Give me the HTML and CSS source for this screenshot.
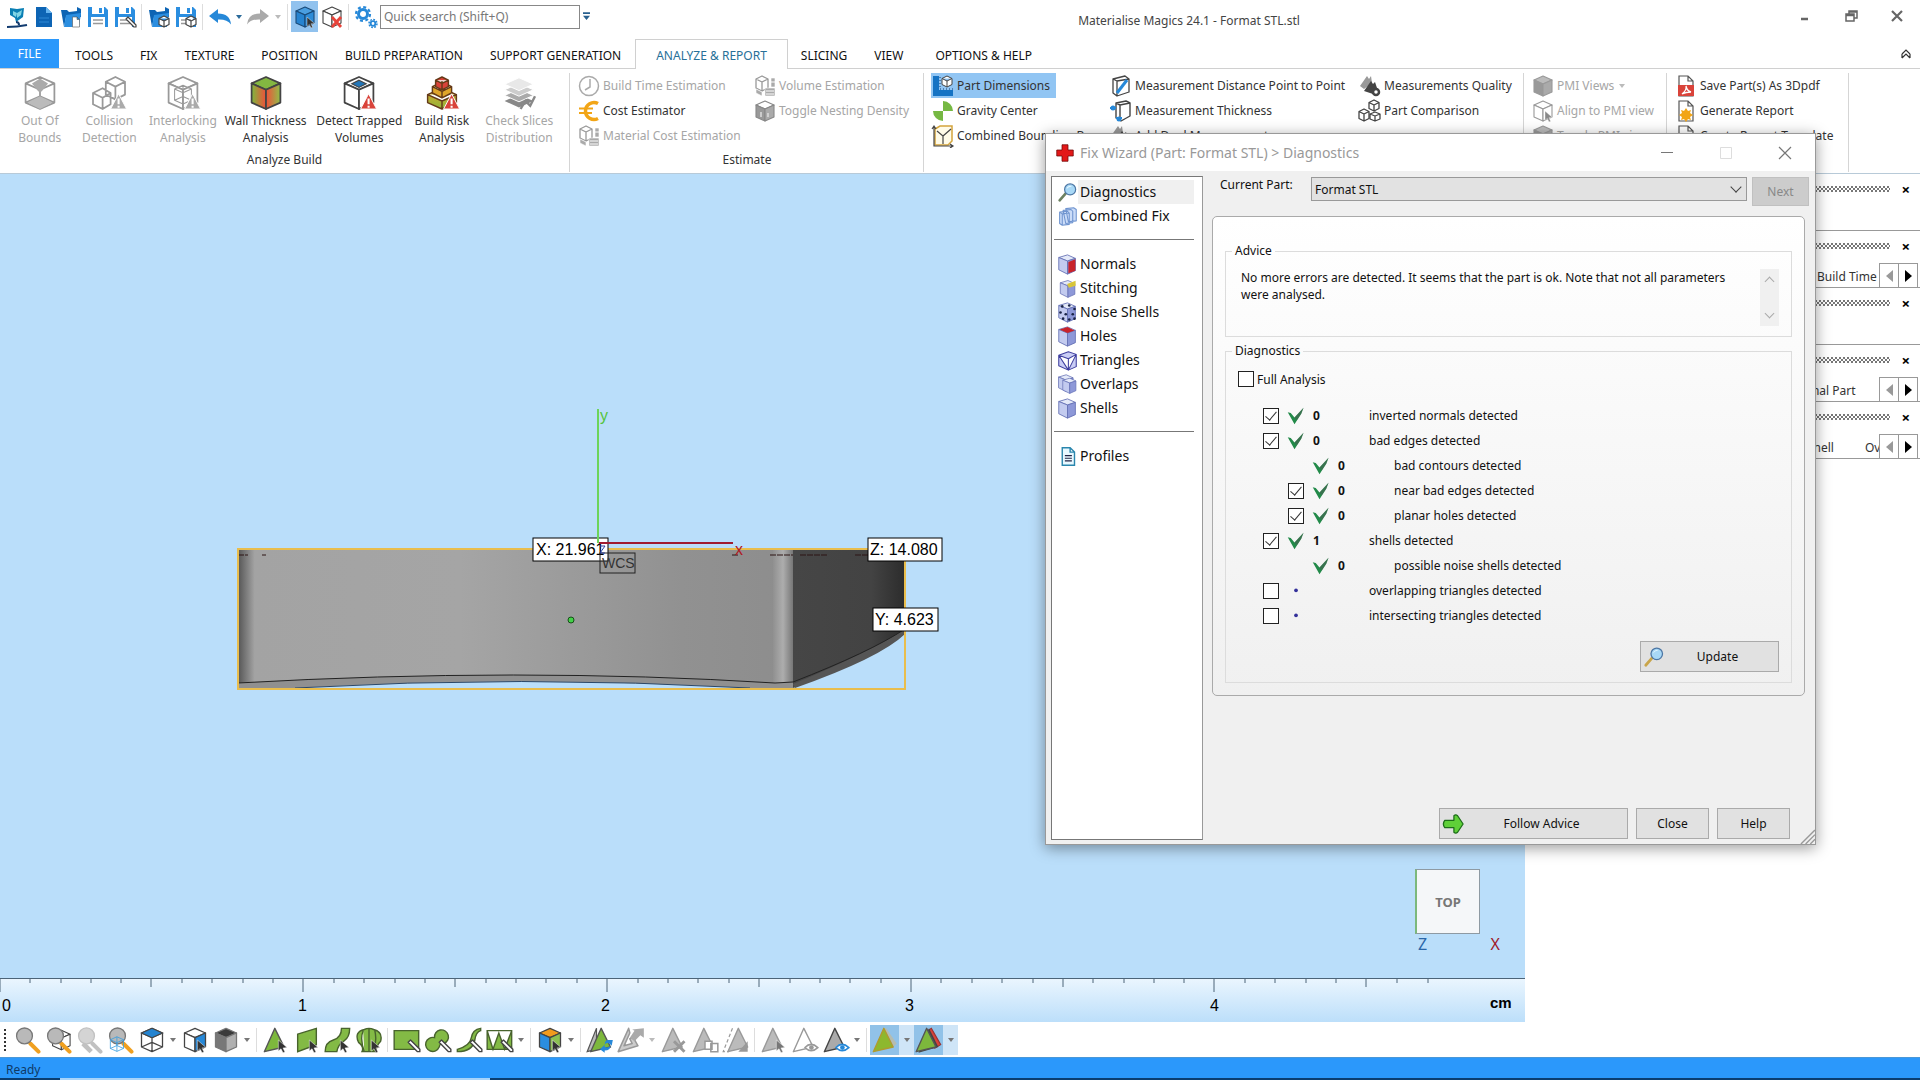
FILE: index.html
```
<!DOCTYPE html>
<html lang="en">
<head>
<meta charset="UTF-8">
<meta name="viewport" content="width=device-width, initial-scale=1.0">
<title>Materialise Magics 24.1 - Format STL.stl</title>
<link rel="stylesheet" href="styles.css">
</head>
<body>

<!-- shared icon shapes, 24x24 -->
<svg class="defs" aria-hidden="true">
<defs>
<linearGradient id="gBody"><stop offset="0" stop-color="#555"/><stop offset=".03" stop-color="#a3a3a3"/><stop offset=".4" stop-color="#a5a5a5"/><stop offset=".8" stop-color="#919191"/><stop offset="1" stop-color="#8d8d8d"/></linearGradient>
<linearGradient id="gEdge"><stop offset="0" stop-color="#909090"/><stop offset=".5" stop-color="#adadad"/><stop offset="1" stop-color="#777"/></linearGradient>
<linearGradient id="gSide"><stop offset="0" stop-color="#464646"/><stop offset=".7" stop-color="#434343"/><stop offset="1" stop-color="#2c2c2c"/></linearGradient>
<linearGradient id="gHeatL"><stop offset="0" stop-color="#7db83c"/><stop offset="1" stop-color="#f0503a"/></linearGradient>
<linearGradient id="gHeatR"><stop offset="0" stop-color="#f0503a"/><stop offset="1" stop-color="#8fc048"/></linearGradient>
<linearGradient id="gRisk" x1="0" y1="0" x2="0" y2="1"><stop offset="0" stop-color="#e0a52c"/><stop offset="1" stop-color="#8fb63a"/></linearGradient>
</defs>
<symbol id="cube" viewBox="0 0 24 24"><g stroke="var(--line,#444)" stroke-width="1.1" stroke-linejoin="round"><path fill="var(--top,#fff)" d="M12 2l9 4-9 4-9-4z"/><path fill="var(--left,#fff)" d="M3 6l9 4v12l-9-4z"/><path fill="var(--right,#fff)" d="M21 6l-9 4v12l9-4z"/></g></symbol>
<symbol id="wire" viewBox="0 0 24 24"><path fill="none" stroke="var(--line,#444)" stroke-width="1.1" stroke-linejoin="round" d="M12 2l9 4-9 4-9-4zM3 6v12l9 4 9-4V6M12 10v12M3 18l9-4 9 4M12 2v12"/></symbol>
<symbol id="warn" viewBox="0 0 24 24"><path fill="var(--warn,#d9433a)" stroke="#fff" stroke-width=".6" d="M18 12.500l5 9.500H13z"/><path stroke="#fff" stroke-width="1.300" d="M18 15.500v3.500M18 20v1.200"/></symbol>
<symbol id="cursor" viewBox="0 0 24 24"><path fill="var(--cur,#333)" stroke="#fff" stroke-width=".4" d="M14 12v9.500l2.300-2 1.700 3.500 1.700-.8-1.700-3.400 3.500-.3z"/></symbol>
<symbol id="tri" viewBox="0 0 24 24"><path fill="var(--fill,#7db83c)" stroke="var(--line,#555)" stroke-width="1.200" stroke-linejoin="round" d="M11 2l8 16L2 22z"/></symbol>
<symbol id="lens" viewBox="0 0 24 24"><path stroke="var(--grip,#f0a020)" stroke-width="3.400" stroke-linecap="round" d="M14 15l7 7"/><circle cx="9" cy="8.500" r="6.800" fill="#b9b9b9" stroke="var(--line,#777)" stroke-width="1.100"/></symbol>
<symbol id="find" viewBox="0 0 24 24"><path stroke="var(--grip,#6c8060)" stroke-width="3" stroke-linecap="round" d="M3 21l7-8"/><circle cx="15" cy="8.500" r="6.300" fill="#a8d8f6" stroke="#4d77a5" stroke-width="1.400"/><path fill="#e6f6ff" d="M11 8a4 4 0 0 1 6-3q-4 0-6 3z"/></symbol>
<symbol id="page" viewBox="0 0 24 24"><path fill="#fff" stroke="#555" stroke-width="1.200" d="M5 2h9l5 5v15H5zM14 2v5h5"/></symbol>
<symbol id="bluepage" viewBox="0 0 24 24"><path fill="#0d64b4" d="M4 2h10l6 6v14H4z"/><path fill="#65b4f0" d="M14 2v6h6z"/><path stroke="#2e87d4" stroke-width="1.200" d="M7 13h10M7 17h10"/></symbol>
<symbol id="open" viewBox="0 0 24 24"><path fill="#0d64b4" d="M2 5h6l2 2 8-1V2l4 2v8H7L5 22z"/><path fill="#2b8ee0" d="M7 10l15-2-2 14H5z"/></symbol>
<symbol id="save" viewBox="0 0 24 24"><path fill="#2b8ee0" d="M2 2h17l3 3v17H2z"/><path fill="#fff" d="M6 2h12v7H6zM5 12h14v10H5z"/><path fill="#2b8ee0" d="M13 3h3v5h-3z"/><path stroke="#999" stroke-width="1.400" d="M7 15h10M7 18.500h10"/></symbol>
<symbol id="pen" viewBox="0 0 24 24"><path fill="#fff" stroke="var(--pen,#444)" stroke-width="1.200" stroke-linejoin="round" d="M13 14l2-2 8 8v2h-2z"/></symbol>
<symbol id="minicube" viewBox="0 0 24 24"><path fill="#fff" stroke="#444" stroke-width="1.200" stroke-linejoin="round" d="M17 11l5 2.500v6L17 22l-5-2.500v-6zM12 13.500l5 2.500 5-2.500M17 16v6"/></symbol>
<symbol id="undo" viewBox="0 0 24 24"><path fill="currentColor" d="M1 11l9-7v4.500q12 0 13 11-4-5.500-13-5V18z"/></symbol>
<symbol id="gear" viewBox="0 0 24 24"><g fill="none" stroke="#2688d8"><circle cx="9" cy="9" r="4.500" stroke-width="3"/><circle cx="9" cy="9" r="7" stroke-width="2.200" stroke-dasharray="3 2.500"/><circle cx="19" cy="18.500" r="2.300" stroke-width="1.800"/><circle cx="19" cy="18.500" r="4" stroke-width="1.500" stroke-dasharray="1.800 1.300"/></g></symbol>
<symbol id="eye" viewBox="0 0 24 24"><path fill="#fff" stroke="var(--eye,#2688d8)" stroke-width="1.300" d="M12 18.500q5-5.500 11 0-6 5.500-11 0z"/><circle cx="17.500" cy="18.500" r="2" fill="var(--eye,#2688d8)"/></symbol>
<symbol id="boxes" viewBox="0 0 24 24"><path fill="#fff" stroke="#999" stroke-width="1.300" stroke-linejoin="round" d="M9 2l6 3v9l-6 3-6-3V5zM3 5l6 3 6-3M9 8v9"/><path fill="#aaa" stroke="#fff" stroke-width=".6" d="M3 15l6 3v4l-6-3zM12 14h10v8H12zM18 4h4v9h-4z"/><path stroke="#fff" d="M13 17h8M13 20h8M18 8h4"/></symbol>
<symbol id="measure" viewBox="0 0 24 24"><path fill="#fff" stroke="#444" stroke-width="1.300" stroke-linejoin="round" d="M4 5l12-3 4 3v13L8 22l-4-3zM4 5l4 2 12-2M8 7v15"/><path stroke="#2688d8" stroke-width="3" d="M8 19L18 6"/></symbol>
<symbol id="tools" viewBox="0 0 24 24"><path fill="#999" d="M2 12L9 2l2 3 2-3 1 7-8 6z"/><path fill="#444" d="M6 17l7-10 2 3 2-2 2 6-4 6z"/><circle cx="18" cy="18" r="3" fill="#fff" stroke="#444" stroke-width="2.500"/></symbol>
<symbol id="check" viewBox="0 0 24 24"><path fill="#228a49" d="M1 7l4 1 5 6L22 1l-3 8-9 14z"/><path fill="#555" opacity=".45" d="M22 1l-3 8-6 9-3-4z"/></symbol>
<symbol id="ccube" viewBox="0 0 24 24"><g stroke="#6671b5" stroke-width="1" stroke-linejoin="round"><path fill="var(--top,#e4e9f8)" d="M2 4l10-3 9 4-9 3z"/><path fill="var(--left,#c3cbef)" d="M2 4l10 4v15L2 18z"/><path fill="var(--right,#8d98d8)" d="M21 5l-9 3v15l9-4z"/></g></symbol>
</svg>

<div class="app">

<header class="titlebar">
<div class="quick">
<button class="qbtn" aria-label="Magics"><svg viewBox="0 0 24 24"><path fill="#0a7fb4" d="M5 3l7 1 7-1-1 9-7 5-1-4-5-3z"/><path fill="#7fd4e4" d="M8 6l4 2-1 4-3-2zM12 8l5-3-1 5-4 3z"/><path fill="none" stroke="#123c70" stroke-width="2" d="M2 22q10 0 20-2M11 17q3 0 3 3"/></svg></button>
<button class="qbtn" aria-label="New"><svg><use href="#bluepage"/></svg></button>
<button class="qbtn" aria-label="Load"><svg><use href="#open"/><use href="#page" x="11" y="11" width="12" height="12"/></svg></button>
<button class="qbtn" aria-label="Save"><svg><use href="#save"/></svg></button>
<button class="qbtn" aria-label="Save as"><svg><use href="#save"/><use href="#pen"/></svg></button>
<i class="qsep"></i>
<button class="qbtn" aria-label="Import part"><svg><use href="#open"/><use href="#minicube"/></svg></button>
<button class="qbtn" aria-label="Save part"><svg><use href="#save"/><use href="#minicube"/></svg></button>
<i class="qsep"></i>
<button class="qbtn blue" aria-label="Undo"><svg><use href="#undo"/></svg></button><i class="caret blue"></i>
<button class="qbtn grey flip" aria-label="Redo"><svg><use href="#undo"/></svg></button><i class="caret pale"></i>
<i class="qsep"></i>
<button class="qbtn on" aria-label="Select parts"><svg><use href="#cube" class="c-blue"/><use href="#cursor"/></svg></button>
<button class="qbtn" aria-label="Unload part"><svg><use href="#cube"/><path stroke="#e8433a" stroke-width="2.800" d="M12 12l9 10M21 12l-9 10"/></svg></button>
<i class="qsep"></i>
<button class="qbtn" aria-label="Settings"><svg><use href="#gear"/></svg></button>
<input class="search" type="text" placeholder="Quick search (Shift+Q)" aria-label="Quick search">
<svg class="more" viewBox="0 0 8 10"><path fill="#28608f" d="M0 0h8v2H0zM0 4h8L4 9z"/></svg>
</div>
<div class="caption">Materialise Magics 24.1 - Format STL.stl</div>
<div class="winbtns">
<button aria-label="Minimize"><svg viewBox="0 0 16 16"><path stroke="#666" stroke-width="2.500" d="M4 11h7"/></svg></button>
<button aria-label="Restore"><svg viewBox="0 0 16 16"><path fill="none" stroke="#666" stroke-width="1.500" d="M6 6V3h8v7h-3M3 6h8v7H3zM3 7.500h8M6 4h8"/></svg></button>
<button aria-label="Close"><svg viewBox="0 0 16 16"><path stroke="#666" stroke-width="2.200" d="M3 3l10 10M13 3L3 13"/></svg></button>
</div>
</header>

<nav class="menu">
<button class="file">FILE</button>
<a href="#">TOOLS</a>
<a href="#">FIX</a>
<a href="#">TEXTURE</a>
<a href="#">POSITION</a>
<a href="#">BUILD PREPARATION</a>
<a href="#">SUPPORT GENERATION</a>
<a href="#" class="active">ANALYZE &amp; REPORT</a>
<a href="#">SLICING</a>
<a href="#">VIEW</a>
<a href="#" class="last">OPTIONS &amp; HELP</a>
<button class="fold" aria-label="Collapse ribbon"><svg viewBox="0 0 12 12"><path fill="none" stroke="#333" stroke-width="1.200" d="M2 6l4-4 4 4M2 10l4-4 4 4M2 6v4M10 6v4"/></svg></button>
</nav>

<section class="ribbon">
<div class="group g-analyze">
<div class="bigs">
<button class="big b1 off"><svg><use href="#wire" class="c-grey"/><path fill="#aaa" d="M12 3l5 3-4 5h-2L7 6z"/><path fill="#bbb" d="M4 18l8-4 8 4-8 4z"/></svg>Out Of<br>Bounds</button>
<button class="big b2 off"><svg viewBox="0 0 24 24"><g fill="#fff" stroke="#999" stroke-width="1.100" stroke-linejoin="round"><path d="M16 2l6 3v8l-6 3-6-3V5zM10 5l6 3 6-3M16 8v8M8 9l5 3v7l-5 3-6-3v-7zM2 12l6 3 5-3M8 15v7"/></g><use href="#warn" class="c-grey"/></svg>Collision<br>Detection</button>
<button class="big b3 off"><svg><use href="#cube" class="c-grey"/><use href="#wire" class="c-grey" x="5" y="6" width="14" height="14"/><use href="#warn" class="c-grey"/></svg>Interlocking<br>Analysis</button>
<button class="big b4"><svg><use href="#cube" class="c-heat"/></svg>Wall Thickness<br>Analysis</button>
<button class="big b5"><svg><use href="#cube"/><path fill="#2376b8" stroke="#444" stroke-width=".7" d="M12 4l4.500 2.200L12 8.500 7.500 6.200z"/><use href="#warn"/></svg>Detect Trapped<br>Volumes</button>
<button class="big b6"><svg viewBox="0 0 24 24"><g stroke="#653a18" stroke-width=".9" stroke-linejoin="round"><path fill="url(#gRisk)" d="M12 9l9 4v5l-9 4-9-4v-5zM3 13l9 4 9-4M12 17v5"/><path fill="#dfa52b" d="M12 5l6 3v4l-6 3-6-3V8zM6 8l6 3 6-3M12 11v4"/><path fill="#d9433a" d="M12 2l4 2v4l-4 2-4-2V4zM8 4l4 2 4-2M12 6v4"/></g><use href="#warn"/></svg>Build Risk<br>Analysis</button>
<button class="big b7 off"><svg viewBox="0 0 24 24"><path fill="#888" d="M12 13l9 4-9 4-9-4z"/><path fill="#aaa" stroke="#fff" stroke-width=".6" d="M12 9.500l9 4-9 4-9-4z"/><path fill="#ccc" stroke="#fff" stroke-width=".6" d="M12 6l9 4-9 4-9-4z"/><path fill="#e8e8e8" stroke="#fff" stroke-width=".6" d="M12 2.500l9 4-9 4-9-4z"/><path fill="none" stroke="#888" stroke-width="1.500" d="M13 22l3-5 3 3 3-6"/></svg>Check Slices<br>Distribution</button>
</div>
<h2>Analyze Build</h2>
</div>

<div class="group g-estimate">
<div class="cols">
<div class="col w176">
<button class="small off"><svg viewBox="0 0 24 24"><circle cx="12" cy="12" r="9.500" fill="#fff" stroke="#aaa" stroke-width="1.500"/><path fill="none" stroke="#aaa" stroke-width="1.500" d="M13 5v8l-5 3"/></svg>Build Time Estimation</button>
<button class="small"><svg viewBox="0 0 24 24"><path fill="none" stroke="#f2a516" stroke-width="3.500" d="M21 4.500A8.500 8.500 0 1 0 21 19.500"/><path stroke="#f2a516" stroke-width="2.200" d="M2 9.500h14M2 14h13"/></svg>Cost Estimator</button>
<button class="small off"><svg><use href="#boxes"/></svg>Material Cost Estimation</button>
</div>
<div class="col">
<button class="small off"><svg><use href="#boxes"/></svg>Volume Estimation</button>
<button class="small off"><svg><use href="#cube" class="c-nest"/><path stroke="#ddd" stroke-width="1.500" d="M8 13v5M15 14v4"/></svg>Toggle Nesting Density</button>
</div>
</div>
<h2>Estimate</h2>
</div>

<div class="group g-measure">
<div class="cols">
<div class="col w180">
<button class="small on"><svg viewBox="0 0 24 24"><path fill="#1573c4" d="M2 2h6v14h14v6H2z"/><path stroke="#123c70" d="M9 3v12M22 15H9" stroke-dasharray="1 2"/><path fill="#fff" stroke="#444" d="M16 2l5 2.500v6L16 13l-5-2.500v-6zM11 4.500L16 7l5-2.500M16 7v6"/></svg>Part Dimensions</button>
<button class="small"><svg viewBox="0 0 24 24"><path fill="#76b843" d="M12 12V2a10 10 0 0 1 10 10zM12 12v10A10 10 0 0 1 2 12z"/></svg>Gravity Center</button>
<button class="small"><svg viewBox="0 0 24 24"><path fill="#fffbe8" stroke="#d3a43c" stroke-width="1.500" d="M4 5l5-3h12v15l-4 4H4z"/><path fill="none" stroke="#444" stroke-width="1.200" d="M3 3v19h18M6 7l6 5v8M12 12l8-7M1 5l2-3 2 3M19 20l3 2-3 2"/></svg>Combined Bounding Box</button>
</div>
<div class="col w248">
<button class="small"><svg><use href="#measure"/></svg>Measurement Distance Point to Point</button>
<button class="small"><svg viewBox="0 0 24 24"><path fill="#fff" stroke="#444" stroke-width="1.400" stroke-linejoin="round" d="M7 4l10-2 4 2v13l-9 5-5-3zM7 4l4 2 10-2M11 6v15"/><path stroke="#2688d8" stroke-width="2" d="M1 9h6M7 19h6"/><circle cx="4" cy="9" r="2.500" fill="#2688d8"/><circle cx="10" cy="20" r="2.500" fill="#2688d8"/></svg>Measurement Thickness</button>
<button class="small"><svg><use href="#tools"/></svg>Add Dual Measurement</button>
</div>
<div class="col">
<button class="small"><svg><use href="#tools"/></svg>Measurements Quality</button>
<button class="small"><svg viewBox="0 0 24 24"><g fill="#fff" stroke="#444" stroke-width="1.300" stroke-linejoin="round"><path d="M16 1l5 2.500v6L16 12l-5-2.500v-6zM11 3.500L16 6l5-2.500M16 6v6M6 10l5 2.500v7L6 22l-5-2.500v-7zM1 12.500L6 15l5-2.500M6 15v7"/><path d="M17 13l5 2v5l-5 2-5-2v-5zM12 15l5 2 5-2M17 17v5"/></g></svg>Part Comparison</button>
</div>
</div>
</div>

<div class="group g-pmi">
<div class="col">
<button class="small off"><svg><use href="#cube" class="c-solid"/></svg>PMI Views <i class="caret pale"></i></button>
<button class="small off"><svg><use href="#cube" class="c-grey"/><use href="#cursor" class="c-grey"/></svg>Align to PMI view</button>
<button class="small off"><svg><use href="#cube" class="c-solid"/></svg>Toggle PMI view</button>
</div>
</div>

<div class="group g-report">
<div class="col">
<button class="small"><svg><use href="#page"/><path fill="#d9433a" d="M4 11h16v11H4z"/><path fill="none" stroke="#fff" stroke-width="1.300" d="M8 20q5-4 4-8 1 5 5 6-5 0-9 2z"/></svg>Save Part(s) As 3Dpdf</button>
<button class="small"><svg><use href="#page"/><path fill="#f2a516" d="M12 9l2 3 3-1-1 3 3 2-3 2 1 3-3-1-2 3-2-3-3 1 1-3-3-2 3-2-1-3 3 1z"/></svg>Generate Report</button>
<button class="small"><svg><use href="#page"/></svg>Create Report Template</button>
</div>
</div>
</section>

<main class="work">
<div class="left">
<div class="viewport">
<svg class="scene" viewBox="0 0 740 310" role="img" aria-label="Part with dimensions">
<path fill="url(#gSide)" d="M573 149H685V232Q670 252 573 288z"/>
<path fill="#555" d="M573 284Q650 252 685 229V234Q660 258 575 288z"/>
<path fill="url(#gBody)" d="M18 149H573V288H530Q300 275 75 288H18z"/>
<path fill="url(#gEdge)" d="M553 149h20v139h-20z"/>
<path fill="#909090" d="M18 283Q300 267 555 283L573 282V288H530Q300 275 75 288H18z"/>
<path fill="none" stroke="#222" d="M18 283Q300 267 555 283L573 282Q650 252 685 229"/>
<path fill="none" stroke="#2c4868" d="M75 288Q300 275 530 288"/>
<path fill="none" stroke="#2c1515" d="M18 155h10M42 155h4M512 155h7M550 155h23M580 155h28M635 155h14" stroke-dasharray="6 1"/>
<path fill="none" stroke="#e9bd4c" stroke-width="2" d="M18 149H685V289H18z"/>
<g class="dim">
<rect x="313" y="138" width="75" height="23"/><text x="316" y="155">X: 21.961</text>
<rect x="648" y="138" width="74" height="23"/><text x="650" y="155">Z: 14.080</text>
<rect x="653" y="208" width="65" height="23"/><text x="655" y="225">Y: 4.623</text>
</g>
<path stroke="#6dd45a" stroke-width="2" d="M378 9v134"/>
<path stroke="#a01c30" stroke-width="2" d="M379 143h134"/>
<rect class="wcs" x="380" y="153" width="35" height="20"/>
<text class="wcstext" x="382" y="168">WCS</text>
<text class="ylab" x="380" y="21">y</text>
<text class="xlab" x="515" y="155">x</text>
<path fill="none" stroke="#2c3f9e" d="M380 146h5l-5 7h5"/>
<circle cx="351" cy="220" r="3" fill="#43d148" stroke="#174d19"/>
</svg>
<div class="orient">
<button class="face">TOP</button>
<div class="axes"><span class="az">Z</span><span class="ax">X</span></div>
</div>
</div>
<svg class="ruler" role="img" aria-label="Scale in centimetres">
<path class="ticks" d="M0 0v13M30 0v4M61 0v4M91 0v4M121 0v4M151 0v8M182 0v4M212 0v4M243 0v4M273 0v4M303 0v13M334 0v4M364 0v4M395 0v4M425 0v4M455 0v8M486 0v4M516 0v4M546 0v4M577 0v4M607 0v13M638 0v4M668 0v4M698 0v4M729 0v4M759 0v8M790 0v4M820 0v4M850 0v4M881 0v4M911 0v13M941 0v4M972 0v4M1002 0v4M1033 0v4M1063 0v8M1093 0v4M1124 0v4M1154 0v4M1184 0v4M1214 0v13M1245 0v4M1275 0v4M1306 0v4M1336 0v4M1366 0v8M1397 0v4M1428 0v4"/>
<text x="2" y="32">0</text><text x="298" y="32">1</text><text x="601" y="32">2</text><text x="905" y="32">3</text><text x="1210" y="32">4</text><text x="1490" y="29" class="unit">cm</text>
</svg>
</div>

<aside class="side">
<section class="pane"><div class="grip"><i></i><button aria-label="Close pane">×</button></div></section>
<section class="pane"><div class="grip"><i></i><button aria-label="Close pane">×</button></div><div class="ptabs"><div class="names n1"><span>Build Time</span></div><button aria-label="Previous"><i class="prev"></i></button><button aria-label="Following"><i class="next"></i></button></div></section>
<section class="pane"><div class="grip"><i></i><button aria-label="Close pane">×</button></div></section>
<section class="pane"><div class="grip"><i></i><button aria-label="Close pane">×</button></div><div class="ptabs"><div class="names n2"><span>Original Part</span></div><button aria-label="Previous"><i class="prev"></i></button><button aria-label="Following"><i class="next"></i></button></div></section>
<section class="pane"><div class="grip"><i></i><button aria-label="Close pane">×</button></div><div class="ptabs"><div class="names n3"><span>Shell</span><span>Overlap</span></div><button aria-label="Previous"><i class="prev"></i></button><button aria-label="Following"><i class="next"></i></button></div></section>
</aside>
</main>

<div class="toolbar">
<i class="handle"></i>
<button aria-label="Zoom"><svg viewBox="0 0 24 24"><use href="#lens"/></svg></button>
<button aria-label="Zoom part"><svg viewBox="0 0 24 24"><use href="#cube" x="4" width="20" height="24"/><use href="#lens"/></svg></button>
<button aria-label="Unzoom"><svg viewBox="0 0 24 24"><g opacity=".6"><path stroke="#999" stroke-width="4" d="M6 15l7 7"/><use href="#lens" class="c-grey"/></g></svg></button>
<button aria-label="Zoom all"><svg viewBox="0 0 24 24"><use href="#lens"/><use href="#wire" class="c-wire" x="1" y="8" width="15" height="15"/></svg></button>
<button aria-label="Top view"><svg viewBox="0 0 24 24"><use href="#wire"/><path fill="#2383d0" stroke="#444" d="M12 2l9 4-9 4-9-4z"/></svg></button><i class="caret"></i>
<button aria-label="Pick plane"><svg viewBox="0 0 24 24"><use href="#cube" class="c-half"/><use href="#cursor"/></svg></button>
<button aria-label="Shading"><svg viewBox="0 0 24 24"><use href="#cube" class="c-shade"/></svg></button><i class="caret"></i>
<i class="sep"></i>
<button aria-label="Mark triangle"><svg viewBox="0 0 24 24"><use href="#tri"/><use href="#cursor"/></svg></button>
<button aria-label="Mark plane"><svg viewBox="0 0 24 24"><path class="leaf" d="M4 7l16-5v14L4 22z"/><use href="#cursor"/></svg></button>
<button aria-label="Mark surface"><svg viewBox="0 0 24 24"><path class="leaf" d="M1 22q0-8 7-10t7-10h7q0 8-5 11t-6 9z"/><use href="#cursor"/></svg></button>
<button aria-label="Mark shell"><svg viewBox="0 0 24 24"><path class="leaf" d="M6 22q2-4-3-8Q-1 5 8 3q4-2 8 0 8 2 6 10-4 4-4 9zM7 4q-3 7 1 18M12 2v20M17 4q2 8-1 18"/><use href="#cursor"/></svg></button>
<i class="sep"></i>
<button aria-label="Mark rectangle"><svg viewBox="0 0 24 24"><path class="leaf" d="M1 4h21v16H1z"/><use href="#pen"/></svg></button>
<button aria-label="Mark brush"><svg viewBox="0 0 24 24"><path class="leaf" d="M9 10a6 6 0 1 1 8 5q-3-1-4 3A6 6 0 1 1 9 10z"/><use href="#pen"/></svg></button>
<button aria-label="Mark curve"><svg viewBox="0 0 24 24"><path class="leaf" d="M22 2q-7 1-8 8T2 20v2q13 0 15-10 1-7 5-8z"/><use href="#pen"/></svg></button>
<button aria-label="Mark mesh"><svg viewBox="0 0 24 24"><path class="leaf" d="M1 4h21v16H1zM1 4l5 16 5-14 5 14 6-16"/><use href="#pen"/></svg></button><i class="caret"></i>
<i class="sep"></i>
<button aria-label="Colour faces"><svg viewBox="0 0 24 24"><use href="#cube" class="c-rgb"/><use href="#cursor"/></svg></button><i class="caret"></i>
<i class="sep"></i>
<button aria-label="Invert marked"><svg viewBox="0 0 24 24"><path fill="#bbb" stroke="#555" d="M9 2L1 22l8-2z"/><use href="#tri" x="2"/><path fill="#2688d8" d="M12 20l4 3v-2q5 0 5-4-2 2-5 1v-2zM23 12l-1 5-2-2q-3-1-4 1 0-4 3-4z"/></svg></button>
<button aria-label="Grow marked"><svg viewBox="0 0 24 24"><path fill="#ccc" stroke="#999" stroke-width="1.300" stroke-linejoin="round" d="M10 2L1 22l17-5-4-7-3 1 2 4-7 2 5-11z"/><path fill="#aaa" d="M11 10l4-6-2-1 10-1v8l-3-2-5 5z"/></svg></button><i class="caret pale"></i>
<button aria-label="Delete marked"><svg viewBox="0 0 24 24"><use href="#tri" class="c-grey"/><path stroke="#999" stroke-width="2.500" d="M12 13l9 9M21 13l-9 9"/></svg></button>
<button aria-label="Copy marked"><svg viewBox="0 0 24 24"><use href="#tri" class="c-grey"/><path fill="#fff" stroke="#999" stroke-width="1.300" d="M12 13h6v7h-6zM17 15h6v7h-6z"/></svg></button>
<button aria-label="Separate marked"><svg viewBox="0 0 24 24"><path fill="none" stroke="#999" stroke-dasharray="3 2" d="M9 2L1 22h5"/><use href="#tri" class="c-grey" x="3"/><path fill="#999" d="M14 22l8-9v9z"/></svg></button>
<i class="sep"></i>
<button aria-label="Select marked"><svg viewBox="0 0 24 24"><use href="#tri" class="c-grey"/><use href="#cursor" class="c-cur"/></svg></button>
<button aria-label="Hide marked"><svg viewBox="0 0 24 24"><use href="#tri" class="c-white"/><use href="#eye" class="c-grey"/></svg></button>
<button aria-label="Show marked"><svg viewBox="0 0 24 24"><use href="#tri" class="c-dark"/><use href="#eye"/></svg></button><i class="caret"></i>
<i class="sep"></i>
<button class="on" aria-label="Front faces"><svg viewBox="0 0 24 24"><path fill="#b5bcb0" d="M13 2l9 13-3 3-8-16z"/><use href="#tri" class="c-lime"/></svg></button><i class="caret lit"></i>
<button class="on" aria-label="Back faces"><svg viewBox="0 0 24 24"><path fill="#d9433a" stroke="#933" d="M14 2l8 14-5 3L11 4z"/><path fill="#444" d="M12 2l8 16-17 5z"/><use href="#tri" x="-1"/></svg></button><i class="caret lit"></i>
</div>

<footer class="status">Ready</footer>
<div class="taskbar"><i></i></div>
</div>

<div class="dialog" role="dialog" aria-labelledby="dlgTitle">
<header class="dtitle">
<svg viewBox="0 0 24 24"><path fill="#e31818" stroke="#6b0505" d="M8 1h8v7h7v8h-7v7H8v-7H1V8h7z"/></svg>
<h1 id="dlgTitle">Fix Wizard (Part: Format STL) &gt; Diagnostics</h1>
<button aria-label="Minimize"><svg viewBox="0 0 16 16"><path stroke="#777" d="M2 7.500h12"/></svg></button>
<button aria-label="Maximize"><svg viewBox="0 0 16 16"><path fill="none" stroke="#ddd" d="M2.500 2.500h11v11h-11z"/></svg></button>
<button aria-label="Close dialog"><svg viewBox="0 0 16 16"><path stroke="#777" stroke-width="1.200" d="M2 2l12 12M14 2L2 14"/></svg></button>
</header>
<div class="dbody">
<nav class="pages">
<a href="#" class="current"><svg viewBox="0 0 24 24"><use href="#find"/></svg><span>Diagnostics</span></a>
<a href="#"><svg viewBox="0 0 24 24"><g fill="#cbdcf8" stroke="#6f94cf" stroke-width="1.200" stroke-linejoin="round"><path d="M10 3l9-1 3 2v13l-9 1zM7 5l9-1 2 2v13l-8 1zM3 7l9-1 2 2v13l-8 1-3-2zM3 7l3 2 8-1M6 9v13"/></g></svg><span>Combined Fix</span></a>
<hr>
<a href="#"><svg viewBox="0 0 24 24"><use href="#ccube"/><path fill="#c8232b" d="M13 9l8-3v13l-8 3z"/></svg><span>Normals</span></a>
<a href="#"><svg viewBox="0 0 24 24"><use href="#ccube" x="2" y="2" width="21" height="21"/><path fill="none" stroke="#d9c638" stroke-width="2.500" d="M12 8l8-3v3l-7 2"/></svg><span>Stitching</span></a>
<a href="#"><svg viewBox="0 0 24 24"><use href="#ccube"/><g fill="#1b2447"><circle cx="6" cy="5" r="1.500"/><circle cx="14" cy="4" r="1.500"/><circle cx="20" cy="8" r="1.500"/><circle cx="4" cy="12" r="1.500"/><circle cx="10" cy="14" r="1.500"/><circle cx="18" cy="14" r="1.500"/><circle cx="7" cy="19" r="1.500"/><circle cx="14" cy="20" r="1.500"/><circle cx="20" cy="19" r="1.500"/></g></svg><span>Noise Shells</span></a>
<a href="#"><svg viewBox="0 0 24 24"><use href="#ccube"/><path fill="#c8232b" d="M3 4l9-3 8 4-8 3z"/></svg><span>Holes</span></a>
<a href="#"><svg viewBox="0 0 24 24"><path fill="#c9cdf5" stroke="#3e3e9e" stroke-width="1.200" stroke-linejoin="round" d="M2 6l11-4 9 3v14l-9 4L2 18zM2 6l11 4 9-5M13 10v13M2 6l11 17 9-18"/></svg><span>Triangles</span></a>
<a href="#"><svg viewBox="0 0 24 24"><use href="#ccube" width="21" height="21"/><use href="#ccube" x="5" y="4" width="19" height="19"/></svg><span>Overlaps</span></a>
<a href="#"><svg viewBox="0 0 24 24"><use href="#ccube"/></svg><span>Shells</span></a>
<hr>
<a href="#"><svg viewBox="0 0 24 24"><path fill="#e8f8ff" stroke="#2a86ad" stroke-width="1.600" d="M6 2h9l5 5v15H6zM15 2v5h5"/><path stroke="#224" stroke-width="1.300" d="M9 11h8M9 14h8M9 17h8"/></svg><span>Profiles</span></a>
</nav>
<div class="dmain">
<div class="partrow">
<label for="part">Current Part:</label>
<div class="combo"><select id="part"><option>Format STL</option></select></div>
<button class="btn nextbtn" disabled>Next</button>
</div>
<div class="sheet">
<fieldset class="advice">
<legend>Advice</legend>
<p>No more errors are detected. It seems that the part is ok. Note that not all parameters were analysed.</p>
<div class="scroll"><i></i><i></i></div>
</fieldset>
<fieldset class="diag">
<legend>Diagnostics</legend>
<label class="full"><input type="checkbox">Full Analysis</label>
<ul>
<li><input type="checkbox" id="d1" checked><svg viewBox="0 0 24 24"><use href="#check"/></svg><b>0</b><label for="d1">inverted normals detected</label></li>
<li><input type="checkbox" id="d2" checked><svg viewBox="0 0 24 24"><use href="#check"/></svg><b>0</b><label for="d2">bad edges detected</label></li>
<li class="sub nobox"><svg viewBox="0 0 24 24"><use href="#check"/></svg><b>0</b><span>bad contours detected</span></li>
<li class="sub"><input type="checkbox" id="d3" checked><svg viewBox="0 0 24 24"><use href="#check"/></svg><b>0</b><label for="d3">near bad edges detected</label></li>
<li class="sub"><input type="checkbox" id="d4" checked><svg viewBox="0 0 24 24"><use href="#check"/></svg><b>0</b><label for="d4">planar holes detected</label></li>
<li><input type="checkbox" id="d5" checked><svg viewBox="0 0 24 24"><use href="#check"/></svg><b>1</b><label for="d5">shells detected</label></li>
<li class="sub nobox"><svg viewBox="0 0 24 24"><use href="#check"/></svg><b>0</b><span>possible noise shells detected</span></li>
<li><input type="checkbox" id="d6"><svg viewBox="0 0 24 24"><circle cx="12" cy="11" r="2.500" fill="#33309a"/></svg><b></b><label for="d6">overlapping triangles detected</label></li>
<li><input type="checkbox" id="d7"><svg viewBox="0 0 24 24"><circle cx="12" cy="11" r="2.500" fill="#33309a"/></svg><b></b><label for="d7">intersecting triangles detected</label></li>
</ul>
<button class="btn update"><svg viewBox="0 0 24 24"><use href="#find" class="c-gold"/></svg><span>Update</span></button>
</fieldset>
</div>
<div class="actions">
<button class="btn follow"><svg viewBox="0 0 24 24"><path fill="#5fd038" stroke="#1e6e1a" stroke-width="1.400" stroke-linejoin="round" d="M3 8h10V3q2-2 4 0l6 9-6 9q-2 2-4 0v-5H3q-3-4 0-8z"/></svg><span>Follow Advice</span></button>
<button class="btn">Close</button>
<button class="btn">Help</button>
</div>
</div>
</div>
<svg class="resize" viewBox="0 0 16 16"><path stroke="#999" stroke-width="1.500" d="M1 16L16 1M6 16L16 6M11 16l5-5"/></svg>
</div>

</body>
</html>
```
FILE: styles.css
```
* {
    box-sizing: border-box;
}
body {
    margin: 0;
    font-family: "Noto Sans", "Open Sans", sans-serif;
    font-size: 12px;
    color: #333;
    background: #fff;
    overflow: hidden;
}
button {
    font: inherit;
    color: inherit;
    background: none;
    border: 0;
    padding: 0;
}
a {
    color: inherit;
    text-decoration: none;
}
svg {
    display: block;
    flex: none;
}
.defs {
    position: absolute;
    width: 0;
    height: 0;
}
.app {
    display: flex;
    flex-direction: column;
    height: 100vh;
}

/* icon colours */
.c-grey {
    --line: #999;
    --fill: #bbb;
    --warn: #aaa;
    --cur: #888;
    --eye: #999;
    --grip: #999;
}
.c-cur { --cur: #777; }
.c-blue { --top: #4a9ee0; --left: #2683d0; --right: #2e8cd8; --line: #1a4a78; }
.c-heat { --top: #83b741; --left: url(#gHeatL); --right: url(#gHeatR); }
.c-nest { --top: #fff; --left: #999; --right: #aaa; --line: #888; }
.c-solid { --top: #bbb; --left: #999; --right: #aaa; --line: #999; }
.c-wire { --line: #3a9fe0; }
.c-half { --right: #2688d8; }
.c-shade { --top: #3a3a3a; --left: #777; --right: #b0b0b0; --line: #777; }
.c-rgb { --top: #f29b1d; --left: #2b8ee0; --right: #8cc152; }
.c-white { --fill: #fff; --line: #999; }
.c-dark { --fill: #aaa; --line: #444; }
.c-lime { --fill: #8db82e; --line: #b09a30; }
.c-gold { --grip: #c9a54a; }

.titlebar {
    display: flex;
    height: 39px;
    position: relative;
}
.quick {
    display: flex;
    height: 33px;
    align-items: center;
    padding-left: 3px;
}
.qbtn {
    width: 27px;
    height: 31px;
    display: flex;
    align-items: center;
    justify-content: center;
}
.qbtn svg {
    width: 24px;
    height: 24px;
}
.qbtn.on {
    background: #91c2ee;
}
.qbtn.blue { color: #2688d8; }
.qbtn.grey { color: #aaa; }
.qbtn.flip { transform: scaleX(-1); }
.qsep {
    width: 1px;
    height: 26px;
    margin: 0 3px;
    background: #ddd;
}
.caret {
    width: 12px;
    height: 8px;
    display: flex;
    align-items: center;
    justify-content: center;
}
.caret::after {
    content: "";
    border: 3px solid transparent;
    border-top: 4px solid #777;
    border-bottom: 0;
}
.caret.blue::after { border-top-color: #2a6a9a; }
.caret.pale::after { border-top-color: #bbb; }
.search {
    width: 200px;
    height: 24px;
    margin: 0 0 0 1px;
    padding: 0 3px;
    border: 1px solid #888;
    font: 12px "Noto Sans", sans-serif;
    color: #555;
}
.search::placeholder {
    color: #777;
}
.more {
    width: 7px;
    height: 9px;
    margin-left: 3px;
}
.caption {
    position: absolute;
    left: 458px;
    right: 0;
    top: 12px;
    text-align: center;
    line-height: 18px;
    color: #444;
    pointer-events: none;
}
.winbtns {
    display: flex;
    margin-left: auto;
    padding-right: 15px;
    gap: 30px;
    height: 31px;
    align-items: center;
}
.winbtns svg {
    width: 16px;
    height: 16px;
}

.menu {
    display: flex;
    height: 30px;
    border-bottom: 1px solid #d0d0d0;
    line-height: 34px;
    color: #111;
}
.menu a {
    padding: 0 14px 0 13px;
    height: 30px;
}
.menu .file {
    width: 59px;
    color: #fff;
    background: #2b98fb;
    margin-right: 3px;
    line-height: 30px;
}
.menu .active {
    height: 30px;
    padding: 0 20px;
    border: 1px solid #d0d0d0;
    border-bottom: 0;
    background: #fff;
    color: #287098;
    line-height: 32px;
}
.menu .last {
    padding-left: 18px;
}
.fold {
    margin-left: auto;
    padding-right: 8px;
}
.fold svg {
    width: 12px;
    height: 12px;
}

.ribbon {
    display: flex;
    height: 105px;
    padding: 4px 0 1px;
    border-bottom: 1px solid #b8cad8;
}
.group {
    display: flex;
    flex-direction: column;
    justify-content: space-between;
    border-right: 1px solid #d5d5d5;
    flex: none;
    white-space: nowrap;
    overflow: hidden;
}
.group h2 {
    margin: 0;
    font-size: 12px;
    font-weight: 400;
    line-height: 18px;
    text-align: center;
    height: 21px;
}
.g-analyze { width: 570px; }
.g-estimate { width: 354px; padding-left: 7px; }
.g-estimate h2 { padding-right: 6px; }
.g-measure { width: 600px; padding-left: 7px; }
.g-pmi { width: 143px; padding-left: 7px; }
.g-report { width: 182px; padding-left: 7px; }
.off {
    color: #a6a6a6;
}
.bigs {
    display: flex;
}
.big {
    display: flex;
    flex-direction: column;
    align-items: center;
    line-height: 17px;
}
.big svg {
    width: 24px;
    height: 24px;
    transform: scale(1.6);
    margin: 8px 0 7px;
}
.b1 { width: 80px; }
.b2 { width: 60px; }
.b3 { width: 88px; }
.b4 { width: 78px; }
.b5 { width: 110px; }
.b6 { width: 56px; }
.b7 { width: 100px; }
.cols {
    display: flex;
}
.col {
    display: flex;
    flex-direction: column;
    align-items: flex-start;
}
.w176 { width: 176px; }
.w180 { width: 178px; }
.w248 { width: 249px; }
.small {
    display: flex;
    align-items: center;
    height: 25px;
    gap: 2px;
    padding-right: 6px;
}
.small svg {
    width: 24px;
    height: 24px;
}
.small.on {
    background: #91c5f3;
}

.work {
    flex: 1;
    display: flex;
    min-height: 0;
}
.left {
    flex: 1;
    display: flex;
    flex-direction: column;
    min-width: 0;
}
.viewport {
    flex: 1;
    position: relative;
    background: #badefa;
}
.scene {
    position: absolute;
    left: 220px;
    top: 226px;
    width: 740px;
    height: 310px;
    font-family: "Liberation Sans", Arial, sans-serif;
    font-size: 16px;
}
.dim rect {
    fill: #fff;
    stroke: #000;
    stroke-width: 1;
}
.wcs {
    fill: none;
    stroke: #222;
}
.wcstext {
    font-size: 14px;
    fill: #333;
}
.ylab { fill: #55c43c; }
.xlab { fill: #b01822; }
.orient {
    position: absolute;
    right: 22px;
    bottom: 24px;
    width: 88px;
}
.face {
    display: block;
    width: 65px;
    height: 65px;
    background: #f5f7f9;
    border: 1px solid #8e9aa3;
    border-left: 2px solid #7cb87c;
    color: #777;
    font-size: 13px;
    font-weight: 700;
}
.axes {
    display: flex;
    justify-content: space-between;
    font-size: 16px;
    line-height: 20px;
    padding: 0 3px;
}
.az { color: #2b66a8; }
.ax { color: #a01828; }
.ruler {
    width: 100%;
    height: 44px;
    background: linear-gradient(#eaf5fe, #bcdffa);
    border-top: 1px solid #4c6478;
    font-family: "Liberation Sans", Arial, sans-serif;
    font-size: 16px;
}
.ruler .ticks {
    stroke: #4c6478;
    stroke-width: 1;
}
.ruler .unit {
    font-size: 15px;
    font-weight: 700;
}

.side {
    width: 395px;
}
.pane {
    height: 57px;
    border-bottom: 1px solid #999;
    padding-top: 4px;
    display: flex;
    flex-direction: column;
    justify-content: space-between;
}
.grip {
    display: flex;
    align-items: center;
    height: 22px;
    padding: 0 10px 0 4px;
    gap: 11px;
}
.grip i {
    flex: 1;
    height: 6px;
    background:
        linear-gradient(#555, #555) 0 0 / 1px 1px,
        conic-gradient(#555 25%, transparent 0 50%, #555 0 75%, transparent 0) 0 0 / 4px 4px;
    background: conic-gradient(#777 25%, transparent 0 50%, #777 0 75%, transparent 0) 0 0 / 4px 4px;
}
.grip button {
    font-weight: 700;
    font-size: 15px;
    line-height: 16px;
    color: #000;
}
.ptabs {
    display: flex;
    height: 24px;
    padding-right: 2px;
}
.names {
    flex: 1;
    display: flex;
    gap: 31px;
    overflow: hidden;
    white-space: nowrap;
    line-height: 28px;
}
.n1 { padding-left: 292px; }
.n2 { padding-left: 259px; }
.n3 { padding-left: 282px; }
.ptabs button {
    width: 20px;
    border: 1px solid #999;
    border-bottom: 0;
    margin-left: -1px;
    display: flex;
    align-items: center;
    justify-content: center;
}
.prev,
.next {
    border: 6px solid transparent;
}
.prev {
    border-left: 0;
    border-right: 7px solid #999;
}
.next {
    border-right: 0;
    border-left: 7px solid #000;
}

.toolbar {
    display: flex;
    align-items: center;
    height: 35px;
    padding-left: 4px;
    background: #fff;
}
.handle {
    height: 22px;
    margin-right: 6px;
    border-left: 2px dotted #333;
}
.toolbar button {
    width: 31px;
    height: 30px;
    display: flex;
    align-items: center;
    justify-content: center;
}
.toolbar svg {
    width: 28px;
    height: 28px;
}
.toolbar .on {
    width: 29px;
    background: #91c2e8;
}
.toolbar .lit {
    width: 15px;
    height: 30px;
    background: #cfe5f7;
}
.sep {
    width: 7px;
    height: 24px;
    border-left: 1px solid #ddd;
    margin-right: -3px;
    margin-left: 3px;
}
.leaf {
    fill: #83ba45;
    stroke: #48632d;
    stroke-width: 1.2px;
}
.status {
    height: 21px;
    line-height: 24px;
    padding-left: 6px;
    background: #2b98fb;
    color: #103a66;
    border-top: 1px solid #4a98d8;
}
.taskbar {
    height: 2px;
    background: #0a3d70;
}
.taskbar i {
    display: block;
    width: 430px;
    height: 2px;
    margin-left: 60px;
    background: #a8d4fa;
}

/* Fix Wizard window */
.dialog {
    position: absolute;
    top: 133px;
    right: 104px;
    width: 771px;
    height: 712px;
    display: flex;
    flex-direction: column;
    border: 1px solid #999;
    background: #f0f0f0;
    box-shadow: 0 3px 14px rgba(0, 0, 0, 0.4);
    color: #111;
}
.dtitle {
    display: flex;
    align-items: center;
    height: 37px;
    background: #fff;
    padding: 0 22px 0 10px;
}
.dtitle > svg {
    width: 18px;
    height: 18px;
}
.dtitle h1 {
    flex: 1;
    margin: 0 0 0 6px;
    font-size: 14px;
    font-weight: 400;
    color: #999;
}
.dtitle button {
    margin-left: 43px;
}
.dtitle button svg {
    width: 16px;
    height: 16px;
}
.dbody {
    flex: 1;
    display: flex;
    padding: 5px 6px 4px 5px;
    gap: 9px;
}
.pages {
    width: 152px;
    border: 1px solid #777;
    border-right-color: #999;
    outline: 1px solid #fff;
    outline-offset: -3px;
    background: #fff;
    padding: 3px 8px 0 2px;
    font-size: 14px;
}
.pages a {
    display: flex;
    align-items: center;
    height: 24px;
    padding-left: 3px;
}
.pages span {
    flex: 1;
    line-height: 24px;
    padding-left: 2px;
}
.pages svg {
    width: 21px;
    height: 21px;
}
.pages .current span {
    background: #f0f0f0;
}
.pages hr {
    border: 0;
    border-top: 1px solid #777;
    margin: 11px 0 12px;
}
.dmain {
    flex: 1;
    display: flex;
    flex-direction: column;
}
.partrow {
    display: flex;
    align-items: flex-start;
    height: 40px;
    padding-top: 1px;
}
.partrow label {
    width: 99px;
    padding-left: 8px;
    line-height: 16px;
}
.combo {
    flex: 1;
    position: relative;
    margin-right: 5px;
}
.combo select {
    width: 100%;
    height: 24px;
    appearance: none;
    border: 1px solid #999;
    border-radius: 0;
    background: #e2e2e2;
    font: inherit;
    color: #111;
    padding: 0 3px;
}
.combo::after {
    content: "";
    position: absolute;
    right: 7px;
    top: 6px;
    width: 7px;
    height: 7px;
    border: solid #444;
    border-width: 0 1px 1px 0;
    transform: rotate(45deg);
}
.btn {
    border: 1px solid #aaa;
    background: #e1e1e1;
    color: #111;
    width: 73px;
    height: 31px;
    display: flex;
    align-items: center;
    justify-content: center;
}
.btn svg {
    width: 22px;
    height: 22px;
    margin-left: 2px;
}
.btn span {
    flex: 1;
    text-align: center;
    padding-right: 8px;
}
.nextbtn {
    width: 57px;
    height: 29px;
    background: #ccc;
    border-color: #c0c0c0;
    color: #888;
}
.sheet {
    margin-right: 4px;
    height: 480px;
    padding: 25px 12px 12px;
    border: 1px solid #aaa;
    border-radius: 5px;
    background: linear-gradient(#fff, #f0f0f0);
}
fieldset {
    margin: 0;
    border: 1px solid #dcdcdc;
    min-width: 0;
}
legend {
    padding: 0 3px;
    line-height: 18px;
}
.advice {
    height: 95px;
    padding: 9px 12px 0 15px;
    margin-bottom: 5px;
    display: flex;
    justify-content: space-between;
}
.advice legend {
    margin-left: -9px;
}
.advice p {
    margin: 0;
    width: 515px;
    line-height: 17px;
}
.scroll {
    width: 19px;
    height: 57px;
    background: #f0f0f0;
    display: flex;
    flex-direction: column;
    justify-content: space-between;
    align-items: center;
    padding: 9px 0;
}
.scroll i {
    width: 7px;
    height: 7px;
    border: solid #aaa;
    border-width: 1px 0 0 1px;
    transform: rotate(45deg);
}
.scroll i:last-child {
    transform: rotate(225deg);
}
.diag {
    height: 341px;
    padding: 9px 12px 10px;
    display: flex;
    flex-direction: column;
}
.diag legend {
    margin-left: -6px;
}
input[type="checkbox"] {
    appearance: none;
    flex: none;
    width: 16px;
    height: 16px;
    margin: 0;
    border: 1px solid #222;
    background: #fff;
    display: flex;
    justify-content: center;
}
input[type="checkbox"]:checked::after {
    content: "";
    width: 5px;
    height: 10px;
    border: solid #333;
    border-width: 0 1px 1px 0;
    transform: rotate(40deg);
}
.full {
    display: flex;
    align-items: center;
    gap: 3px;
    height: 20px;
}
.diag ul {
    list-style: none;
    margin: 14px 0 0 25px;
    padding: 0;
}
.diag li {
    display: flex;
    align-items: center;
    height: 25px;
}
.diag li.sub {
    padding-left: 25px;
}
.diag li.nobox {
    padding-left: 41px;
}
.diag li svg {
    width: 18px;
    height: 18px;
    margin: 0 8px;
}
.diag b {
    width: 56px;
    font-size: 12px;
}
.update {
    width: 139px;
    margin: auto 0 0 auto;
}
.actions {
    display: flex;
    justify-content: flex-end;
    gap: 8px;
    margin: auto 19px 1px 0;
}
.follow {
    width: 189px;
}
.resize {
    position: absolute;
    right: 0;
    bottom: 0;
    width: 15px;
    height: 15px;
}
```
